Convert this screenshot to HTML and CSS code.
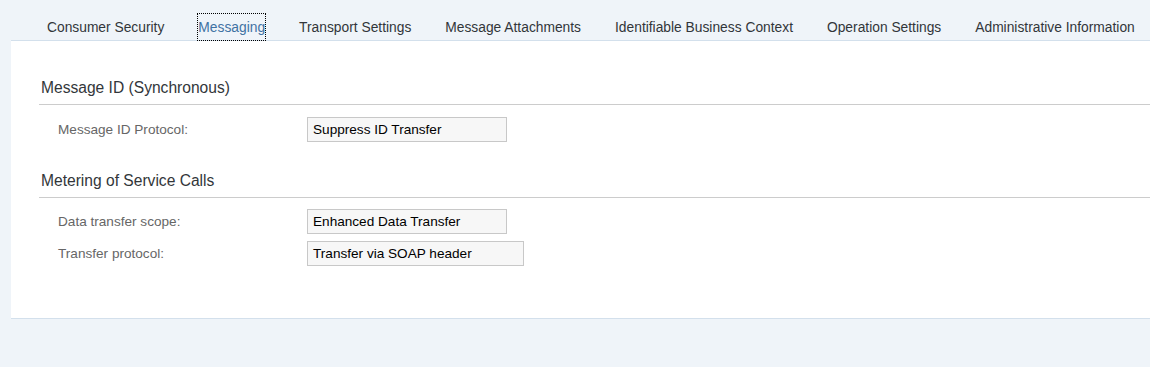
FILE: index.html
```html
<!DOCTYPE html>
<html lang="en">
<head>
  <meta charset="UTF-8">
  <title>Messaging</title>
  <link rel="stylesheet" href="styles.css">
</head>
<body>
  <div class="tabs">
    <div class="tab">Consumer Security</div>
    <div class="tab selected">Messaging</div>
    <div class="tab">Transport Settings</div>
    <div class="tab">Message Attachments</div>
    <div class="tab">Identifiable Business Context</div>
    <div class="tab">Operation Settings</div>
    <div class="tab">Administrative Information</div>
  </div>

  <div class="panel">
    <div class="section">
      <div class="section-title">Message ID (Synchronous)</div>
      <div class="row">
        <div class="label">Message ID Protocol:</div>
        <div class="field">Suppress ID Transfer</div>
      </div>
    </div>

    <div class="section">
      <div class="section-title">Metering of Service Calls</div>
      <div class="row">
        <div class="label">Data transfer scope:</div>
        <div class="field">Enhanced Data Transfer</div>
      </div>
      <div class="row">
        <div class="label">Transfer protocol:</div>
        <div class="field field-wide">Transfer via SOAP header</div>
      </div>
    </div>
  </div>
</body>
</html>
```

FILE: styles.css
```css
body {
  background-color: #eff4f9;
  color: #32363a;
  font-family: "Liberation Sans", Arial, sans-serif;
  margin: 0;
  overflow: hidden;
}

.tabs {
  display: flex;
  gap: 34px;
  padding: 14px 0 0 47px;
  height: 26px;
}

.tab {
  font-size: 13.8px;
  line-height: 27px;
  height: 26px;
  white-space: nowrap;
  color: #32363a;
}

.tab.selected {
  color: #3f72a3;
  outline: 1px dotted #000;
  position: relative;
  z-index: 1;
}

.panel {
  background: #fff;
  margin-left: 11px;
  border-top: 1px solid #d3e0ec;
  border-bottom: 1px solid #d3e0ec;
  padding: 37px 0 52px 28px;
}

.section + .section {
  margin-top: 29px;
}

.section-title {
  font-size: 15.6px;
  line-height: 20px;
  padding: 0 0 6px 2px;
  border-bottom: 1px solid #cccccc;
  margin-bottom: 11px;
}

.section:first-child .section-title {
  margin-bottom: 12px;
}

.row {
  display: flex;
  align-items: center;
  padding-left: 19px;
}

.row + .row {
  margin-top: 7px;
}

.label {
  width: 249px;
  font-size: 13.6px;
  color: #666666;
}

.field {
  width: 188px;
  height: 23px;
  line-height: 23px;
  padding: 0 5px;
  font-size: 13.6px;
  color: #000;
  background: #f7f7f7;
  border: 1px solid #c8c8c8;
}

.field-wide {
  width: 205px;
}
```
